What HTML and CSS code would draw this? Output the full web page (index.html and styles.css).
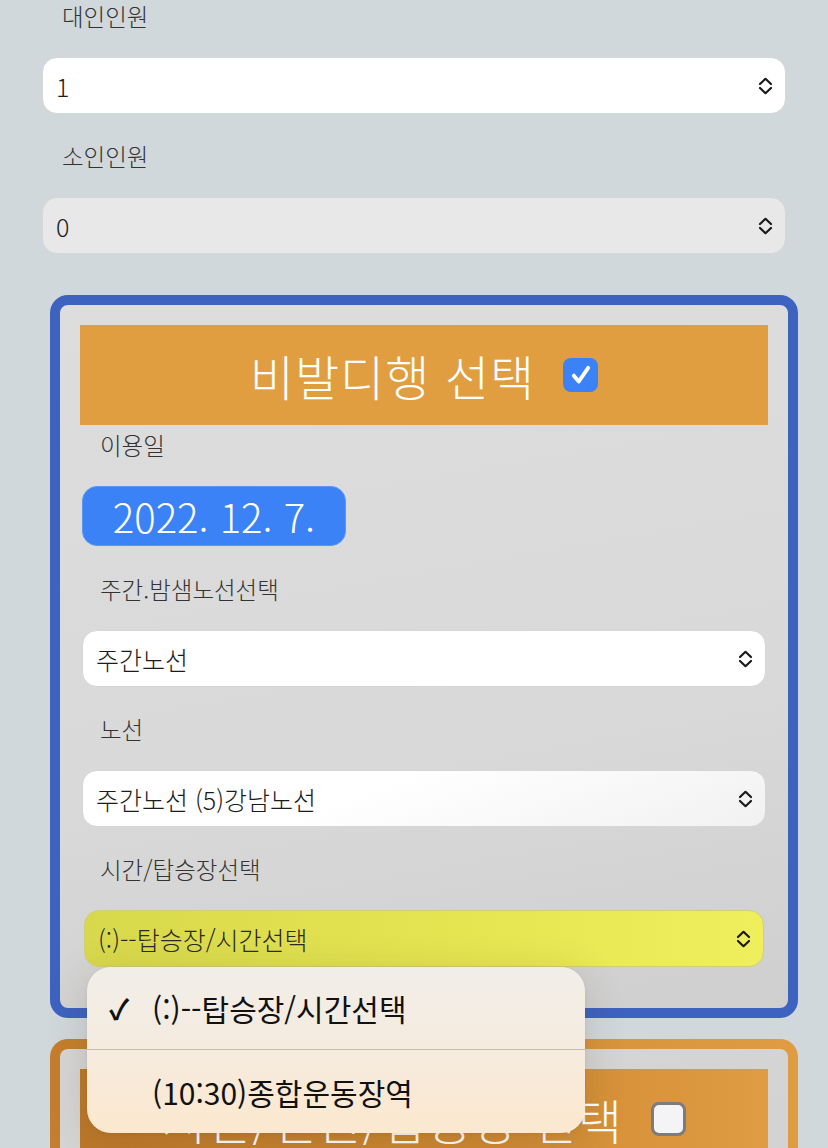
FILE: index.html
```html
<!DOCTYPE html>
<html lang="ko">
<head>
  <meta charset="UTF-8" />
  <meta name="viewport" content="width=device-width, initial-scale=1.0" />
  <title>셔틀 예약</title>
  <link rel="stylesheet" href="styles.css">
</head>
<body>
  <div class="page">
    <div class="field-label">대인인원</div>
    <div class="select">
      <span>1</span>
      <svg class="chev" viewBox="0 0 16 18"><path d="M2.5 7 L8 1.8 L13.5 7 M2.5 11 L8 16.2 L13.5 11" /></svg>
    </div>

    <div class="field-label">소인인원</div>
    <div class="select select-off">
      <span>0</span>
      <svg class="chev" viewBox="0 0 16 18"><path d="M2.5 7 L8 1.8 L13.5 7 M2.5 11 L8 16.2 L13.5 11" /></svg>
    </div>

    <section class="card card-blue">
      <div class="card-head">
        <span>비발디행 선택</span>
        <span class="check check-on">
          <svg viewBox="0 0 20 20"><path d="M4.5 10.5 L8.3 15 L15.5 4.5" /></svg>
        </span>
      </div>

      <div class="field-label field-first">이용일</div>
      <div class="date-btn">2022. 12. 7.</div>

      <div class="field-label">주간.밤샘노선선택</div>
      <div class="select">
        <span>주간노선</span>
        <svg class="chev" viewBox="0 0 16 18"><path d="M2.5 7 L8 1.8 L13.5 7 M2.5 11 L8 16.2 L13.5 11" /></svg>
      </div>

      <div class="field-label">노선</div>
      <div class="select select-soft">
        <span>주간노선 (5)강남노선</span>
        <svg class="chev" viewBox="0 0 16 18"><path d="M2.5 7 L8 1.8 L13.5 7 M2.5 11 L8 16.2 L13.5 11" /></svg>
      </div>

      <div class="field-label">시간/탑승장선택</div>
      <div class="select-wrap">
        <div class="select select-yellow">
          <span>(:)--탑승장/시간선택</span>
          <svg class="chev" viewBox="0 0 16 18"><path d="M2.5 7 L8 1.8 L13.5 7 M2.5 11 L8 16.2 L13.5 11" /></svg>
        </div>
        <div class="picker">
          <div class="picker-row">
            <span class="tick">✓</span>
            <span>(:)--탑승장/시간선택</span>
          </div>
          <div class="picker-row">
            <span class="tick"></span>
            <span>(10:30)종합운동장역</span>
          </div>
        </div>
      </div>
    </section>

    <section class="card card-orange">
      <div class="card-inner">
        <div class="card-head head-orange">
          <span>시간/인원/탑승장 선택</span>
          <span class="check"></span>
        </div>
        <div class="field-label field-first">이용일</div>
        <div class="date-btn">2022. 12. 7.</div>
      </div>
    </section>
  </div>
</body>
</html>
```

FILE: styles.css
```css
body {
  margin: 0;
  background: #d0d8dc;
  font-family: "Noto Sans CJK KR", "Noto Sans", sans-serif;
  color: #222;
  overflow: hidden;
}
.page {
  width: 744px;
  margin-left: 42px;
  padding-top: 1px;
}
.field-label {
  padding-left: 20px;
  font-size: 23.5px;
  line-height: 30px;
  font-weight: 300;
  color: #333;
  margin-bottom: 26px;
}
.field-first {
  margin-top: 5px;
}
.select {
  display: flex;
  align-items: center;
  justify-content: space-between;
  height: 57px;
  box-sizing: border-box;
  padding: 0 11px 0 13px;
  background: #fff;
  border: 1px solid #d4d6d8;
  border-radius: 15px;
  font-size: 25px;
  font-weight: 300;
  color: #1c1c1c;
  margin-bottom: 27px;
}
.select-off {
  background: #e8e8e8;
}
.select-soft {
  background: linear-gradient(160deg, #ffffff 40%, #f1f1f1);
}
.select-yellow {
  background: linear-gradient(90deg, #d8d84c, #e6e652 60%, #efee5c);
  border-color: #cfd070;
  color: #2a2a2a;
  margin-bottom: 0;
}
.chev {
  width: 17px;
  height: 18px;
  fill: none;
  stroke: #1a1a1a;
  stroke-width: 2.2;
  stroke-linecap: round;
  stroke-linejoin: round;
}

.card {
  box-sizing: border-box;
  width: 748px;
  margin: 41px 0 0 8px;
  border-radius: 18px;
}
.card-blue {
  border: 10px solid #3d62c0;
  background: linear-gradient(170deg, #dddddd, #d9d9d9 60%, #cfcfcf);
  padding: 20px 20px 41px;
}
.card-blue .select {
  margin-left: 2px;
  margin-right: 2px;
}
.card-orange {
  margin-top: 21px;
  border: 10px solid transparent;
  background:
    linear-gradient(170deg, #d6d6d6, #cfcfcf) padding-box,
    linear-gradient(90deg, #c47e2c, #e09c42) border-box;
  height: 400px;
}
.card-inner {
  padding: 20px;
}
.card-head {
  display: flex;
  align-items: center;
  justify-content: center;
  gap: 28px;
  height: 100px;
  background: #e09e40;
  color: #fff;
  font-size: 48px;
  font-weight: 300;
  letter-spacing: 1px;
}
.head-orange {
  background: linear-gradient(90deg, #bd782a, #d08a34 60%, #e09c42);
}
.check {
  box-sizing: border-box;
  width: 35px;
  height: 34px;
  border-radius: 8px;
  border: 3px solid #7c7c7c;
  background: #f4f4f6;
  display: flex;
  align-items: center;
  justify-content: center;
}
.check-on {
  border: none;
  background: #3b82f6;
}
.check svg {
  width: 26px;
  height: 26px;
  fill: none;
  stroke: #fff;
  stroke-width: 3;
  stroke-linecap: round;
  stroke-linejoin: round;
}
.date-btn {
  display: flex;
  align-items: center;
  justify-content: center;
  width: 264px;
  height: 60px;
  box-sizing: border-box;
  margin: 0 0 28px 2px;
  background: #3b82f6;
  border: 1px solid #5b95f0;
  border-radius: 15px;
  color: #fff;
  font-size: 40px;
  font-weight: 300;
}

.select-wrap {
  position: relative;
  margin: 0 2px;
}
.picker {
  position: absolute;
  top: 57px;
  left: 5px;
  width: 498px;
  border-radius: 24px;
  background: linear-gradient(180deg, #f1eee9, #f5ebde 50%, #fce8cf);
  box-shadow: 0 8px 40px rgba(80, 60, 30, 0.18), 0 1px 4px rgba(0, 0, 0, 0.06);
  overflow: hidden;
  z-index: 5;
}
.picker-row {
  display: flex;
  align-items: center;
  height: 82px;
  padding-left: 22px;
  font-size: 30px;
  color: #111;
}
.picker-row + .picker-row {
  border-top: 1px solid #c6bdb1;
  height: 83px;
}
.tick {
  width: 43px;
  font-size: 28px;
  font-weight: 700;
}
```
